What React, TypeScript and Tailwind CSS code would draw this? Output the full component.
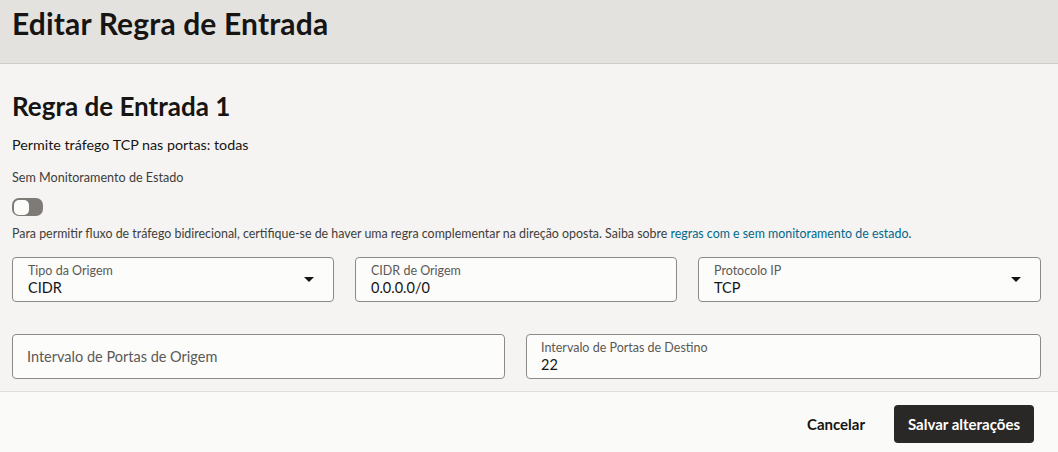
import React from "react";

function Caret() {
  return (
    <svg width="10" height="5" viewBox="0 0 10 5" className="shrink-0">
      <path d="M0 0 L10 0 L5 5 Z" fill="#161513" />
    </svg>
  );
}

function Field({
  label,
  value,
  select,
}: {
  label: string;
  value: string;
  select?: boolean;
}) {
  return (
    <div className="h-[45px] rounded-[4px] border border-[#8c8a86] bg-[#fcfcfb] pl-[15px] pr-[19px] flex items-center">
      <div className="flex-1 flex flex-col">
        <span className="text-[12.5px] leading-[14px] text-[#5b5955]">{label}</span>
        <span className="text-[14.5px] leading-[17px] text-[#161513] mt-[1px]">{value}</span>
      </div>
      {select && <Caret />}
    </div>
  );
}

export default function App() {
  return (
    <div className="w-[1058px] h-[452px] flex flex-col bg-[#f5f4f2] font-['Lato',sans-serif] text-[#161513] overflow-hidden">
      <header className="h-[64px] shrink-0 bg-[#e4e2de] border-b border-[#d0cdc9] px-[12px] pt-[6px]">
        <h1 className="text-[30px] leading-[35px] font-bold tracking-[0.15px]">Editar Regra de Entrada</h1>
      </header>
      <main className="flex-1 px-[12px] pt-[27px]">
        <h2 className="text-[26px] leading-[31px] font-bold">Regra de Entrada 1</h2>
        <p className="mt-[14px] text-[14.3px] leading-[17px]">Permite tráfego TCP nas portas: todas</p>
        <p className="mt-[18px] text-[12.6px] leading-[14px] text-[#3f3d3a]">Sem Monitoramento de Estado</p>
        <div className="mt-[13px] w-[31px] h-[18px] rounded-[7px] bg-[#7e7b77] p-[1.5px] flex items-center">
          <div className="w-[15px] h-[15px] rounded-[5px] bg-[#fcfcfb]" />
        </div>
        <p className="mt-[11px] text-[12.4px] leading-[14px] text-[#3f3d3a]">
          Para permitir fluxo de tráfego bidirecional, certifique-se de haver uma regra complementar na direção oposta. Saiba sobre{" "}
          <span className="text-[#00688c]">regras com e sem monitoramento de estado</span>.
        </p>
        <div className="mt-[16px] grid grid-cols-[322px_322px_343px] gap-x-[21px]">
          <Field label="Tipo da Origem" value="CIDR" select />
          <Field label="CIDR de Origem" value="0.0.0.0/0" />
          <Field label="Protocolo IP" value="TCP" select />
        </div>
        <div className="mt-[32px] grid grid-cols-[493px_515px] gap-x-[21px]">
          <div className="h-[45px] rounded-[4px] border border-[#8c8a86] bg-[#fcfcfb] pl-[14px] flex items-center">
            <span className="text-[14.5px] text-[#5b5955]">Intervalo de Portas de Origem</span>
          </div>
          <div className="h-[45px] rounded-[4px] border border-[#8c8a86] bg-[#fcfcfb] pl-[14px] flex flex-col justify-center">
            <span className="text-[12.5px] leading-[14px] text-[#5b5955]">Intervalo de Portas de Destino</span>
            <span className="text-[14.5px] leading-[17px] mt-[1px]">22</span>
          </div>
        </div>
      </main>
      <footer className="h-[61px] shrink-0 bg-[#fafaf9] border-t border-[#e0dedb] flex justify-end items-start pt-[13px] pr-[24px] gap-[29px]">
        <button className="h-[38px] text-[15px] font-bold text-[#161513]">Cancelar</button>
        <button className="h-[38px] w-[140px] rounded-[4px] bg-[#2a2826] text-[15px] font-bold text-white">Salvar alterações</button>
      </footer>
    </div>
  );
}
